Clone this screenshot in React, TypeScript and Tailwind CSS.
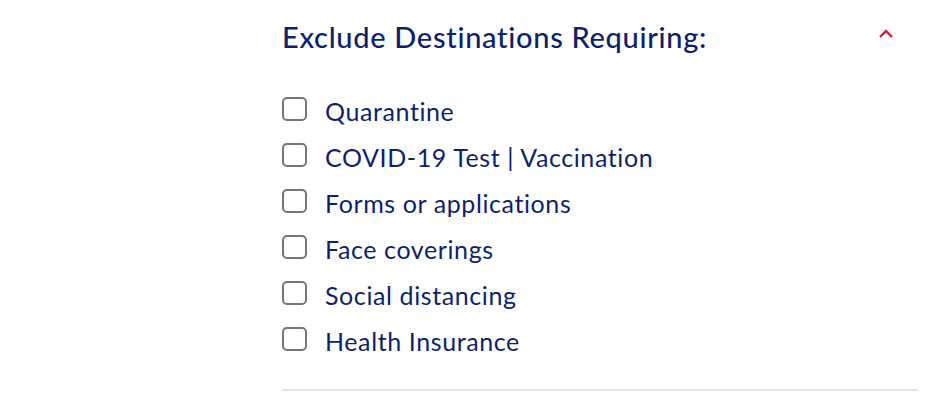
import React from 'react';

const options = [
  'Quarantine',
  'COVID-19 Test | Vaccination',
  'Forms or applications',
  'Face coverings',
  'Social distancing',
  'Health Insurance',
];

const App: React.FC = () => {
  return (
    <div className="w-[940px] h-[400px] bg-white overflow-hidden font-['Lato',sans-serif]">
      <div className="ml-[282px] w-[636px] pt-[17px]">
        {/* Section header */}
        <div className="flex items-center justify-between h-[40px]">
          <h2 className="text-[29px] font-medium text-[#0e1f6b] tracking-[0.7px]">Exclude Destinations Requiring:</h2>
          <svg width="16" height="12" viewBox="0 0 16 12" className="mr-[24px] -mt-[6px]">
            <path d="M2 9 L8 3 L14 9" fill="none" stroke="#e01933" strokeWidth="2.4" />
          </svg>
        </div>

        {/* Options */}
        <ul className="mt-[40px] flex flex-col gap-[22px]">
          {options.map((opt) => (
            <li key={opt} className="flex items-start h-[24px]">
              <span className="w-[25px] h-[24px] rounded-[5px] border-2 border-[#767676] shrink-0" />
              <span className="ml-[18px] mt-[2px] text-[25px] text-[#0e1f6b] leading-none tracking-[0.6px]">{opt}</span>
            </li>
          ))}
        </ul>

        <div className="mt-[38px] h-[2px] bg-[#e3e3e3]" />
      </div>
    </div>
  );
};

export default App;
